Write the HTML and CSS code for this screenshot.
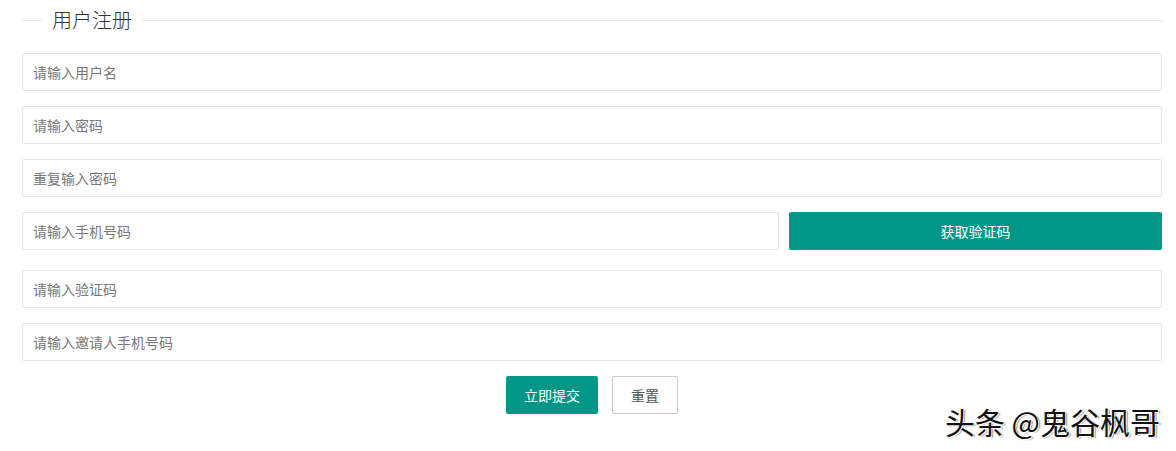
FILE: index.html
```html
<!DOCTYPE html>
<html lang="zh-CN">
<head>
<meta charset="utf-8">
<title>用户注册</title>
<link rel="stylesheet" href="styles.css">
</head>
<body>
<div class="page">
  <div class="legend"><span class="legend-text">用户注册</span></div>
  <form class="form">
    <input class="input" type="text" placeholder="请输入用户名">
    <input class="input" type="password" placeholder="请输入密码">
    <input class="input" type="password" placeholder="重复输入密码">
    <div class="row-code">
      <input class="input" type="text" placeholder="请输入手机号码">
      <button type="button" class="btn btn-block">获取验证码</button>
    </div>
    <input class="input" type="text" placeholder="请输入验证码">
    <input class="input" type="text" placeholder="请输入邀请人手机号码">
    <div class="actions">
      <button type="button" class="btn">立即提交</button>
      <button type="button" class="btn btn-primary">重置</button>
    </div>
  </form>
  <div class="watermark">头条 @鬼谷枫哥</div>
</div>
</body>
</html>
```
FILE: styles.css
```css
* { box-sizing: border-box; }
html, body { margin: 0; padding: 0; background: #fff; }
body {
  font-family: "Noto Sans CJK SC", "Noto Sans", "Liberation Sans", sans-serif;
  font-size: 14px;
  color: #333;
}
.page {
  position: relative;
  width: 1176px;
  height: 451px;
  padding: 0 14px 0 22px;
}
.legend {
  display: flex;
  align-items: center;
  height: 40px;
  margin-right: -2px;
}
.legend::before {
  content: "";
  width: 20px;
  border-top: 1px solid #e6e6e6;
}
.legend::after {
  content: "";
  flex: 1;
  border-top: 1px solid #e6e6e6;
}
.legend-text {
  padding: 0 10px;
  font-size: 20px;
  line-height: 24px;
  font-weight: 300;
  color: #333;
}
.form {
  display: flex;
  flex-direction: column;
  gap: 15px;
  margin-top: 13px;
}
.input {
  display: block;
  width: 100%;
  height: 38px;
  padding: 0 10px;
  border: 1px solid #e6e6e6;
  border-radius: 2px;
  background: #fff;
  font-family: inherit;
  font-size: 14px;
  color: #333;
  outline: none;
}
.input::placeholder { color: #777; }
.row-code {
  display: grid;
  grid-template-columns: 757fr 373fr;
  column-gap: 10px;
  margin-bottom: 5px;
}
.btn {
  height: 38px;
  padding: 0 18px;
  border: none;
  border-radius: 2px;
  background: #009688;
  color: #fff;
  font-family: inherit;
  font-size: 14px;
  cursor: pointer;
}
.btn-block { width: 100%; }
.btn-primary {
  background: #fff;
  border: 1px solid #c9c9c9;
  color: #555;
}
.actions {
  display: flex;
  justify-content: center;
  gap: 14px;
}
.watermark {
  position: absolute;
  right: 16px;
  top: 402px;
  font-size: 30px;
  line-height: 38px;
  color: #111;
  text-shadow: 1px 1px 0 #fff, -1px -1px 0 #fff, 2px 1px 1px #888;
}
```
